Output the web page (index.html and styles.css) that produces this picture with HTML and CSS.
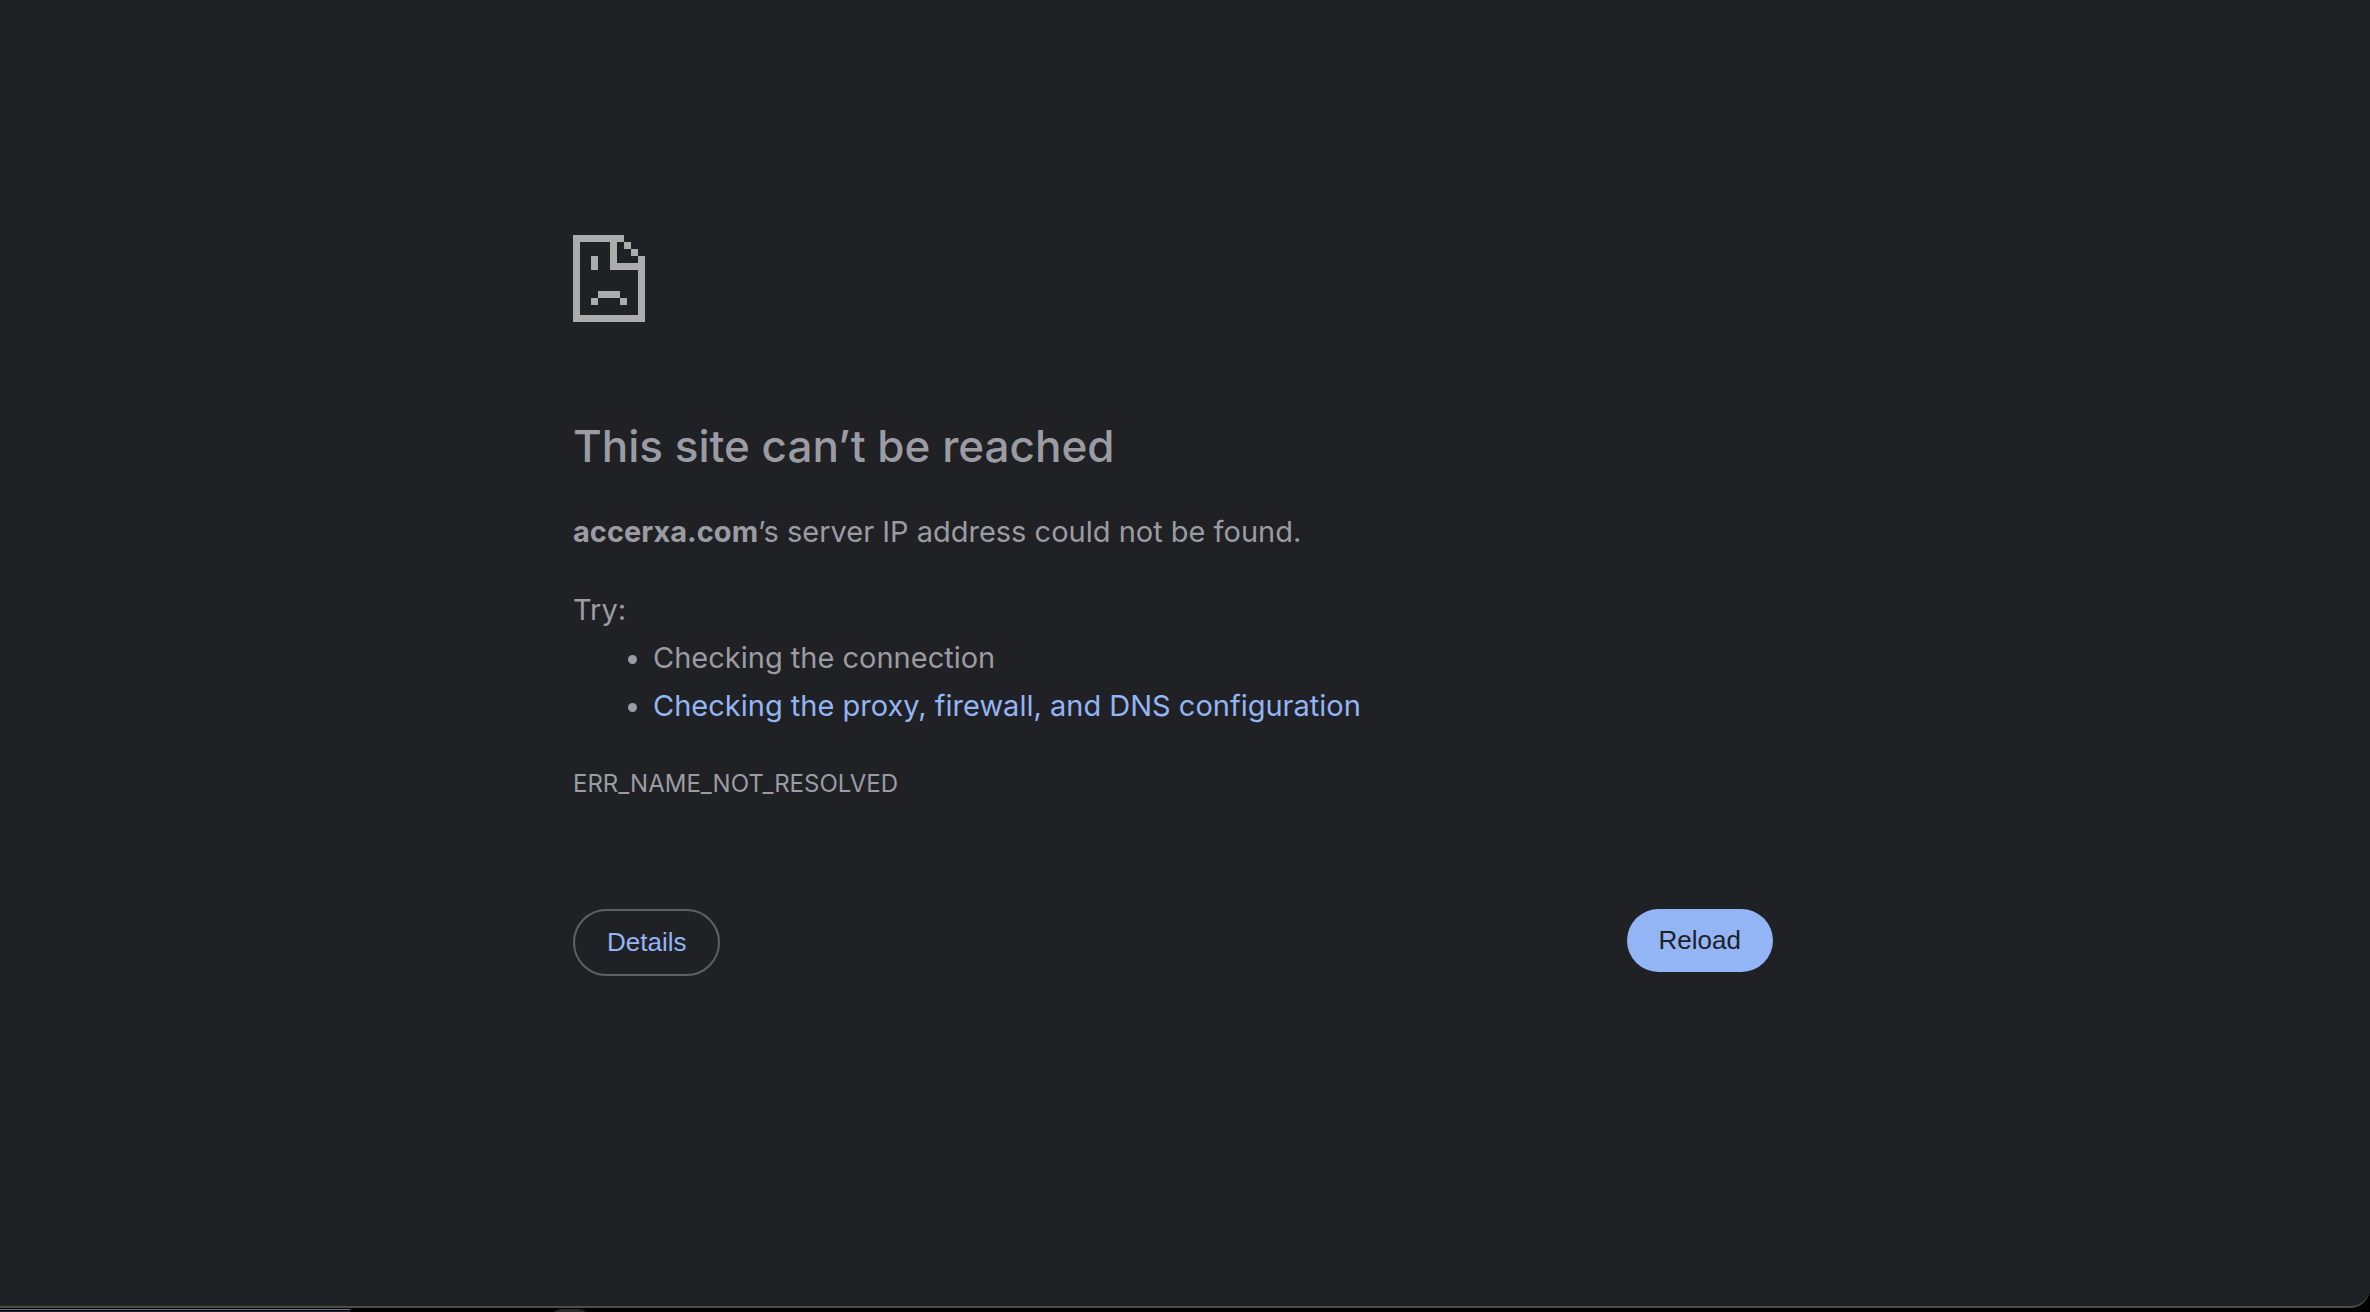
FILE: index.html
```
<!DOCTYPE html>
<html lang="en">
<head>
    <meta charset="UTF-8">
    <meta name="viewport" content="width=device-width, initial-scale=1.0">
    <title>accerxa.com</title>
    <link rel="stylesheet" href="styles.css">
</head>
<body>

    <div class="window">
        <main class="error-page">
            <svg class="error-icon" viewBox="0 0 72 87" shape-rendering="crispEdges" aria-hidden="true">
                <!-- page outline and folded corner -->
                <path d="M0 0h51v7h-7v21h21v-7h7v66H0zM7 7v73h58V35H37V7z"/>
                <path d="M51 7h7v7h-7zM58 14h7v7h-7z"/>
                <!-- face -->
                <path d="M18 21h7v14h-7zM25 56h22v7H25zM18 63h7v7h-7zM47 63h7v7h-7z"/>
            </svg>

            <h1>This site can’t be reached</h1>
            <p class="summary"><strong>accerxa.com</strong>’s server IP address could not be found.</p>

            <div class="suggestions">
                <p>Try:</p>
                <ul>
                    <li>Checking the connection</li>
                    <li><a href="#buttons">Checking the proxy, firewall, and DNS configuration</a></li>
                </ul>
            </div>

            <p class="error-code">ERR_NAME_NOT_RESOLVED</p>

            <div class="buttons" id="buttons">
                <button type="button" class="details-btn">Details</button>
                <button type="button" class="reload-btn">Reload</button>
            </div>
        </main>
    </div>
    <div class="desktop-edge">
        <div class="edge-window"></div>
        <div class="edge-knob"></div>
    </div>

</body>
</html>
```

FILE: styles.css
```
* {
    margin: 0;
    padding: 0;
    box-sizing: border-box;
}
body {
    display: flex;
    flex-direction: column;
    min-height: 100vh;
    background-color: #000;
    color: #9b9ca3;
    font-family: Inter, "Liberation Sans", sans-serif;
    font-size: 29px;
    line-height: 48px;
}
.window {
    flex: 1;
    padding: 235px 24px 0 0;
    background-color: #202124;
    border-bottom: 2px solid #4c4c4b;
    border-bottom-right-radius: 20px;
}
.error-page {
    max-width: 1200px;
    margin: 0 auto;
}
.error-icon {
    display: block;
    width: 72px;
    height: 87px;
    fill: #acacac;
}
h1 {
    margin-top: 96px;
    font-size: 44px;
    font-weight: 500;
    line-height: 56px;
}
.summary {
    margin-top: 34px;
}
.suggestions {
    margin-top: 30px;
}
.suggestions ul {
    padding-left: 80px;
}
a {
    color: #93b4f5;
    text-decoration: none;
}
.error-code {
    margin-top: 30px;
    font-size: 24px;
}
.buttons {
    display: flex;
    justify-content: space-between;
    align-items: flex-start;
    margin-top: 101px;
}
button {
    padding: 16px 32px;
    border: none;
    border-radius: 34px;
    font-family: "Liberation Sans", Arial, sans-serif;
    font-size: 26px;
    line-height: 31px;
    cursor: pointer;
}
.details-btn {
    border: 2px solid #5f6063;
    background-color: transparent;
    color: #93b4f5;
}
.reload-btn {
    background-color: #93b4f5;
    color: #202124;
}
.desktop-edge {
    display: flex;
    height: 4px;
    overflow: hidden;
}
.edge-window {
    width: 350px;
    margin-top: 1px;
    border-top: 1px solid #77777a;
    border-bottom: 1px solid #1b2540;
}
.edge-knob {
    width: 40px;
    height: 40px;
    margin: 1px 0 0 200px;
    border-radius: 12px;
    background-color: #2a2a2a;
}
```
